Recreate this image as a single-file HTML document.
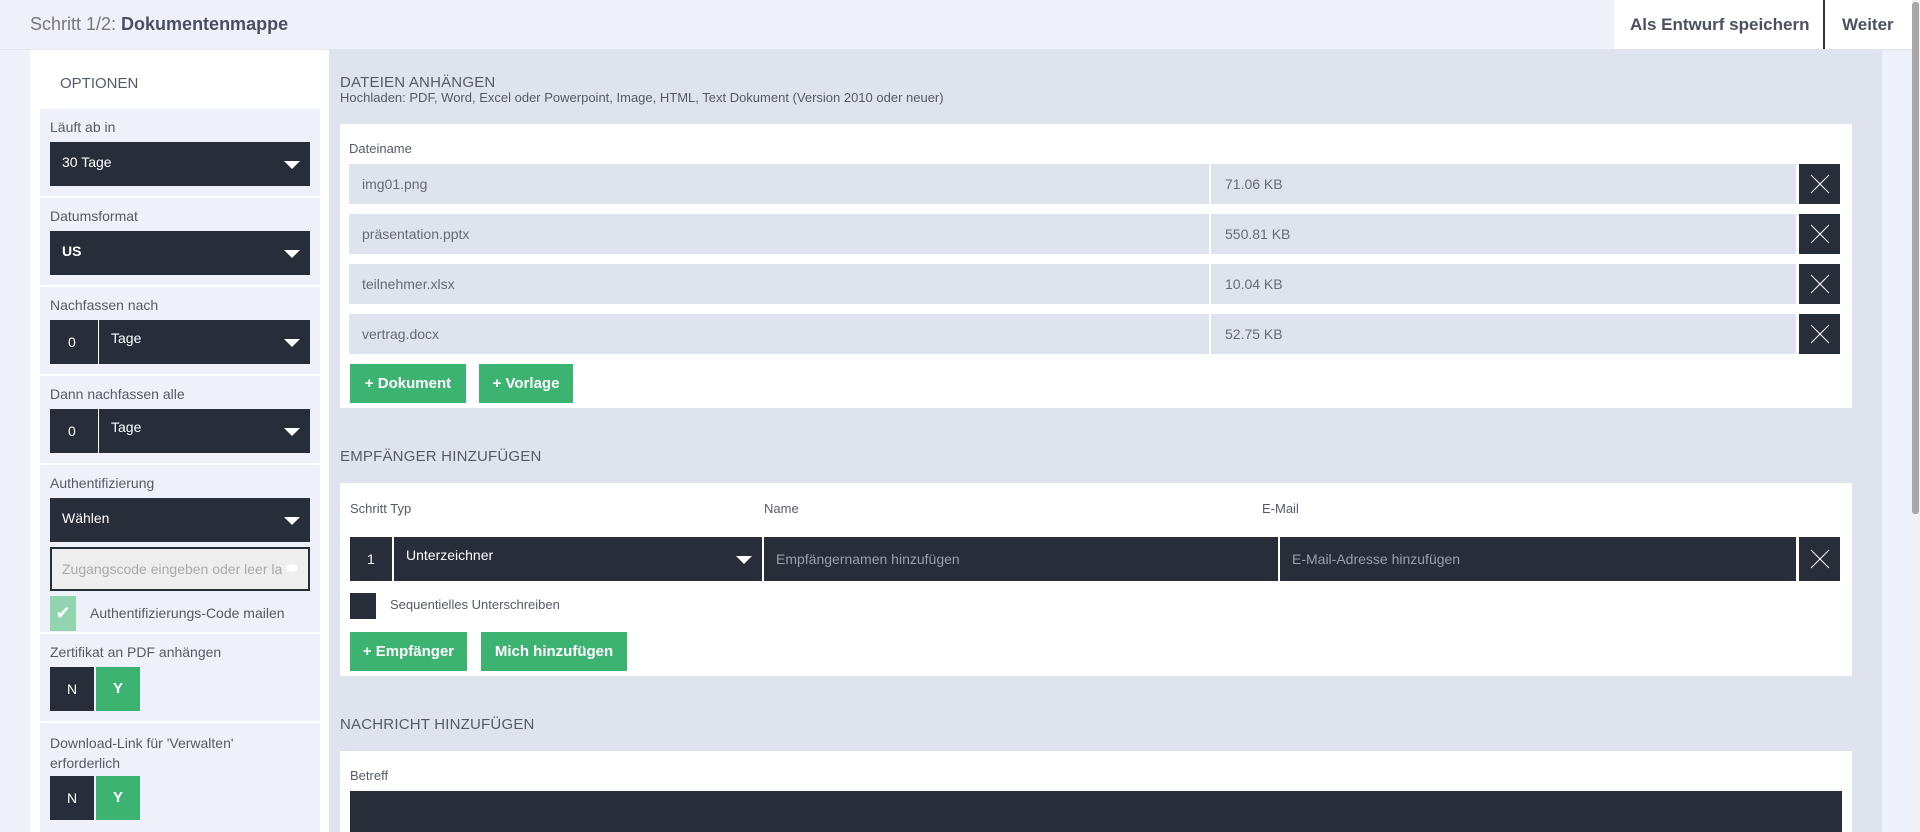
<!DOCTYPE html>
<html><head><meta charset="utf-8"><style>
*{margin:0;padding:0;box-sizing:border-box}
body{width:1920px;height:832px;overflow:hidden;background:#eef1f9;font-family:"Liberation Sans",sans-serif;color:#555b66;position:relative}
.a{position:absolute}
.dark{background:#272d39;color:#fff}
.lbl{font-size:14px;color:#555b66}
.box{position:absolute;left:40px;width:280px;background:#eef1f9}
.sel{position:absolute;left:10px;width:260px;height:44px;background:#272d39;color:#fff;font-size:14px}
.sel .t{position:absolute;left:12px;top:12px}
.tri{position:absolute;right:10px;top:19px;width:0;height:0;border-left:8px solid transparent;border-right:8px solid transparent;border-top:8px solid #fff}
.row{position:absolute;left:349px;height:40px;font-size:14px;color:#666b76}
.row .n{position:absolute;left:0;width:860px;height:40px;background:#dfe3ee;padding:12px 13px}
.row .s{position:absolute;left:862px;width:585px;height:40px;background:#dfe3ee;padding:12px 14px}
.xb{position:absolute;width:41px;height:40px;background:#272d39}
.btn{position:absolute;height:39px;background:#3cb371;color:#fff;font-weight:bold;font-size:15px;text-align:center;line-height:39px}
.h2{position:absolute;left:340px;font-size:15px;color:#555b66;letter-spacing:.2px}
.yn{position:absolute;left:10px;height:44px;width:90px}
.yn .N{position:absolute;left:0;width:44px;height:44px;background:#272d39;color:#fff;font-size:14px;text-align:center;line-height:44px}
.yn .Y{position:absolute;left:46px;width:44px;height:44px;background:#3cb371;color:#fff;font-weight:bold;font-size:15px;text-align:center;line-height:44px}
</style></head><body>
<div class="a" style="left:30px;top:14px;font-size:18px;color:#777"><span>Schritt 1/2: </span><b style="color:#4a5060">Dokumentenmappe</b></div>
<div class="a" style="left:1614px;top:0;width:298px;height:49px;background:#fff"></div>
<div class="a" style="left:1823px;top:0;width:2px;height:49px;background:#333"></div>
<div class="a" style="left:1630px;top:15px;font-size:17px;font-weight:bold;color:#4a5060">Als Entwurf speichern</div>
<div class="a" style="left:1842px;top:15px;font-size:17px;font-weight:bold;color:#4a5060">Weiter</div>
<div class="a" style="left:0;top:49px;width:1912px;height:1px;background:#e2e5ee"></div>
<div class="a" style="left:1912px;top:0;width:8px;height:832px;background:#f1f1f1"></div>
<div class="a" style="left:1912px;top:2px;width:7px;height:512px;background:#a8a8a8;border-radius:3px"></div>
<div class="a" style="left:30px;top:50px;width:299px;height:782px;background:#fff"></div>
<div class="a" style="left:60px;top:75px;font-size:15px;color:#555b66">OPTIONEN</div>

<div class="box" style="top:109px;height:87px"><div class="lbl a" style="left:10px;top:10px">Läuft ab in</div><div class="sel" style="top:33px"><span class="t">30 Tage</span><div class="tri"></div></div></div>
<div class="box" style="top:198px;height:87px"><div class="lbl a" style="left:10px;top:10px">Datumsformat</div><div class="sel" style="top:33px"><span class="t" style="font-weight:bold">US</span><div class="tri"></div></div></div>
<div class="box" style="top:287px;height:87px"><div class="lbl a" style="left:10px;top:10px">Nachfassen nach</div><div class="sel" style="top:33px"><span class="a" style="left:18px;top:14px">0</span><div class="a" style="left:48px;top:0;width:1px;height:44px;background:#fff"></div><span class="t" style="left:61px;top:10px">Tage</span><div class="tri"></div></div></div>
<div class="box" style="top:376px;height:87px"><div class="lbl a" style="left:10px;top:10px">Dann nachfassen alle</div><div class="sel" style="top:33px"><span class="a" style="left:18px;top:14px">0</span><div class="a" style="left:48px;top:0;width:1px;height:44px;background:#fff"></div><span class="t" style="left:61px;top:10px">Tage</span><div class="tri"></div></div></div>
<div class="box" style="top:465px;height:167px"><div class="lbl a" style="left:10px;top:10px">Authentifizierung</div><div class="sel" style="top:33px"><span class="t">Wählen</span><div class="tri"></div></div>
<div class="a" style="left:10px;top:82px;width:260px;height:44px;background:#eee;border:2px solid #272d39;font-size:14px;color:#aaa;padding:12px 10px;white-space:nowrap;overflow:hidden">Zugangscode eingeben oder leer la<span class="a" style="left:234px;top:15px;width:12px;height:8px;border-radius:50%;background:#fff"></span></div>
<div class="a" style="left:10px;top:131px;width:26px;height:35px;background:#92d4b0;color:#fff;font-size:18px;text-align:center;line-height:35px">✔</div>
<div class="lbl a" style="left:50px;top:140px">Authentifizierungs-Code mailen</div></div>
<div class="box" style="top:634px;height:87px"><div class="lbl a" style="left:10px;top:10px">Zertifikat an PDF anhängen</div><div class="yn" style="top:33px"><div class="N">N</div><div class="Y">Y</div></div></div>
<div class="box" style="top:723px;height:109px"><div class="lbl a" style="left:10px;top:10px;line-height:20px">Download-Link für 'Verwalten'<br>erforderlich</div><div class="yn" style="top:53px"><div class="N">N</div><div class="Y">Y</div></div></div>

<div class="a" style="left:329px;top:50px;width:1553px;height:782px;background:#dfe3ee"></div>
<div class="h2" style="top:74px">DATEIEN ANHÄNGEN</div>
<div class="a" style="left:340px;top:90px;font-size:13px;color:#555b66">Hochladen: PDF, Word, Excel oder Powerpoint, Image, HTML, Text Dokument (Version 2010 oder neuer)</div>
<div class="a" style="left:340px;top:124px;width:1512px;height:284px;background:#fff"></div>
<div class="lbl a" style="left:349px;top:141px;font-size:13px">Dateiname</div>
<div class="row" style="top:164px"><div class="n">img01.png</div><div class="s">71.06 KB</div></div>
<div class="row" style="top:214px"><div class="n">präsentation.pptx</div><div class="s">550.81 KB</div></div>
<div class="row" style="top:264px"><div class="n">teilnehmer.xlsx</div><div class="s">10.04 KB</div></div>
<div class="row" style="top:314px"><div class="n">vertrag.docx</div><div class="s">52.75 KB</div></div>
<svg class="xb" style="left:1799px;top:164px" viewBox="0 0 41 40"><path d="M12 11L30 29M30 11L12 29" stroke="#fff" stroke-width="1"/></svg>
<svg class="xb" style="left:1799px;top:214px" viewBox="0 0 41 40"><path d="M12 11L30 29M30 11L12 29" stroke="#fff" stroke-width="1"/></svg>
<svg class="xb" style="left:1799px;top:264px" viewBox="0 0 41 40"><path d="M12 11L30 29M30 11L12 29" stroke="#fff" stroke-width="1"/></svg>
<svg class="xb" style="left:1799px;top:314px" viewBox="0 0 41 40"><path d="M12 11L30 29M30 11L12 29" stroke="#fff" stroke-width="1"/></svg>
<div class="btn" style="left:350px;top:364px;width:116px">+ Dokument</div>
<div class="btn" style="left:479px;top:364px;width:94px">+ Vorlage</div>

<div class="h2" style="top:448px">EMPFÄNGER HINZUFÜGEN</div>
<div class="a" style="left:340px;top:483px;width:1512px;height:193px;background:#fff"></div>
<div class="lbl a" style="left:350px;top:501px;font-size:13px">Schritt Typ</div>
<div class="lbl a" style="left:764px;top:501px;font-size:13px">Name</div>
<div class="lbl a" style="left:1262px;top:501px;font-size:13px">E-Mail</div>
<div class="a dark" style="left:350px;top:537px;width:42px;height:44px;font-size:14px;padding:14px 0 0 17px">1</div>
<div class="a dark" style="left:394px;top:537px;width:368px;height:44px;font-size:14px;padding:10px 12px">Unterzeichner<div class="tri" style="top:19px"></div></div>
<div class="a dark" style="left:764px;top:537px;width:514px;height:44px;font-size:14px;color:#9aa0aa;padding:14px 12px">Empfängernamen hinzufügen</div>
<div class="a dark" style="left:1280px;top:537px;width:516px;height:44px;font-size:14px;color:#9aa0aa;padding:14px 12px">E-Mail-Adresse hinzufügen</div>
<svg class="xb" style="left:1799px;top:537px;height:44px" viewBox="0 0 41 44"><path d="M12 13L30 31M30 13L12 31" stroke="#fff" stroke-width="1"/></svg>
<div class="a" style="left:350px;top:593px;width:26px;height:26px;background:#272d39"></div>
<div class="lbl a" style="left:390px;top:597px;font-size:13px">Sequentielles Unterschreiben</div>
<div class="btn" style="left:350px;top:632px;width:117px">+ Empfänger</div>
<div class="btn" style="left:481px;top:632px;width:146px">Mich hinzufügen</div>

<div class="h2" style="top:716px">NACHRICHT HINZUFÜGEN</div>
<div class="a" style="left:340px;top:751px;width:1512px;height:81px;background:#fff"></div>
<div class="lbl a" style="left:350px;top:768px;font-size:13px">Betreff</div>
<div class="a dark" style="left:350px;top:791px;width:1492px;height:41px"></div>
</body></html>
